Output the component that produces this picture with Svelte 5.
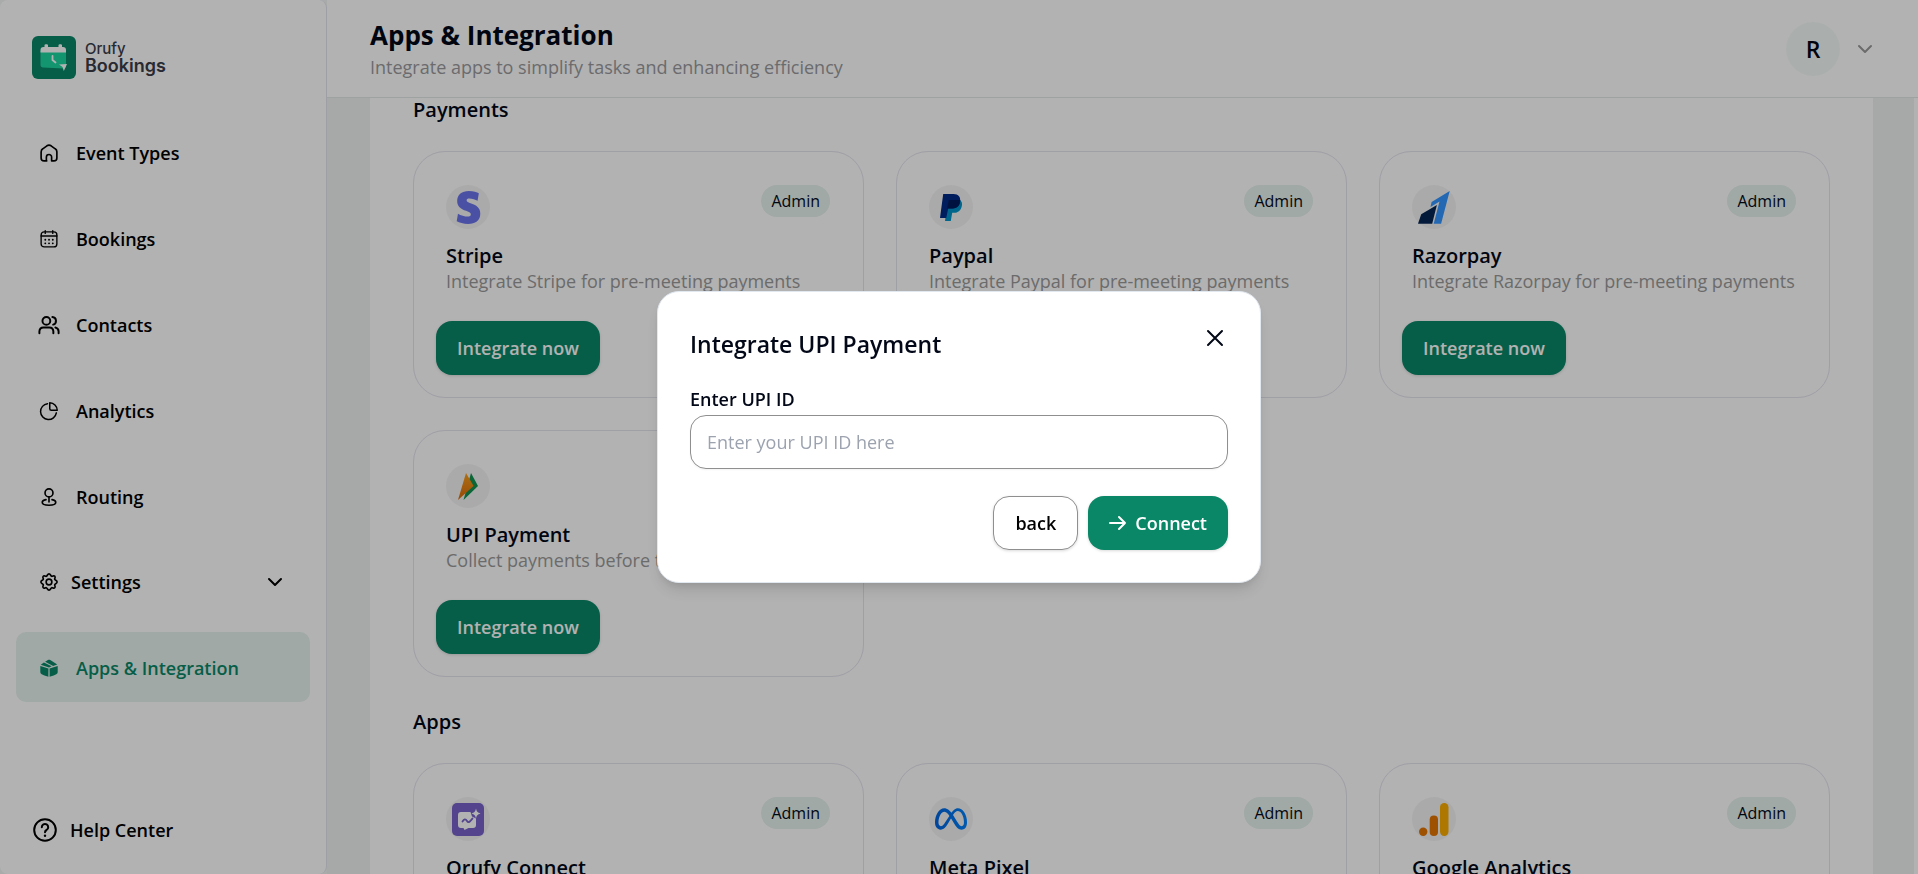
<script>
  const navItems = [
    { label: 'Event Types', icon: 'home' },
    { label: 'Bookings', icon: 'calendar' },
    { label: 'Contacts', icon: 'users' },
    { label: 'Analytics', icon: 'pie' },
    { label: 'Routing', icon: 'routing' },
    { label: 'Settings', icon: 'gear', expandable: true },
    { label: 'Apps & Integration', icon: 'box', active: true }
  ];

  const sections = [
    {
      title: 'Payments',
      cards: [
        { name: 'Stripe', logo: 'stripe', text: 'Integrate Stripe for pre-meeting payments', admin: true },
        { name: 'Paypal', logo: 'paypal', text: 'Integrate Paypal for pre-meeting payments', admin: true },
        { name: 'Razorpay', logo: 'razorpay', text: 'Integrate Razorpay for pre-meeting payments', admin: true },
        { name: 'UPI Payment', logo: 'upi', text: 'Collect payments before the meeting', admin: true }
      ]
    },
    {
      title: 'Apps',
      cards: [
        { name: 'Orufy Connect', logo: 'connect', text: 'Integrate Orufy Connect', admin: true },
        { name: 'Meta Pixel', logo: 'meta', text: 'Integrate Meta Pixel', admin: true },
        { name: 'Google Analytics', logo: 'analytics', text: 'Integrate Google Analytics', admin: true }
      ]
    }
  ];

  let open = $state(true);
  let upiId = $state('');
</script>

{#snippet navIcon(name)}
  <svg class="nav-icon" viewBox="0 0 24 24" fill="none" stroke="currentColor" stroke-width="2.2" stroke-linecap="round" stroke-linejoin="round" aria-hidden="true">
    {#if name === 'home'}
      <path d="M9 22.500H5.500A4 4 0 0 1 1.500 18.500V10.500A5 5 0 0 1 3.700 6.400L9.200 2.400A5 5 0 0 1 14.800 2.400L20.300 6.400A5 5 0 0 1 22.500 10.500V18.500A4 4 0 0 1 18.500 22.500H15.500V17.500A3.500 3.500 0 0 0 8.500 17.500V22.500" />
    {:else if name === 'calendar'}
      <rect x="1.500" y="2.500" width="21" height="20" rx="4" stroke-width="1.800" />
      <path d="M1.500 8H22.500M7 .8V4.500M17 .8V4.500" stroke-width="1.800" />
      <path d="M7 13h.1M12 13h.1M17 13h.1M7 17.800h.1M12 17.800h.1M17 17.800h.1" stroke-width="2.400" />
    {:else if name === 'users'}
      <circle cx="8.500" cy="6.500" r="5.200" stroke-width="2.600" />
      <path d="M-.8 23V20.500A5.500 5.500 0 0 1 4.500 15.300H12.500A5.500 5.500 0 0 1 17.800 20.500V23M16.500 1.300A5.200 5.200 0 0 1 17.500 11.500M20.500 15.300A5.500 5.500 0 0 1 24.800 20.500V23" stroke-width="2.600" />
    {:else if name === 'pie'}
      <path d="M10 2.200A10.600 10.600 0 1 0 21.800 14.500" stroke-width="2" />
      <path d="M13 1A10.300 10.300 0 0 1 23 11H15A2 2 0 0 1 13 9Z" stroke-width="2" />
    {:else if name === 'routing'}
      <circle cx="12" cy="6.500" r="5.300" stroke-width="2.200" />
      <path d="M12 12V18.500M8 15.500C5 16 3 17.200 3 19 3 21.300 7 23 12 23S21 21.300 21 19C21 17.200 19 16 16 15.500" stroke-width="2.200" />
    {:else if name === 'gear'}
      <circle cx="12" cy="12" r="3.800" />
      <path d="M12 1.200C14.200 1.200 14.200 4 15.600 4.400 17 4.800 18.200 2.900 19.700 4.300 21.200 5.800 19.200 7 19.600 8.400 20 9.800 22.800 9.800 22.800 12S20 14.200 19.600 15.600C19.200 17 21.200 18.200 19.700 19.700 18.200 21.200 17 19.200 15.600 19.600 14.200 20 14.200 22.800 12 22.800S9.800 20 8.400 19.600C7 19.200 5.800 21.200 4.300 19.700 2.800 18.200 4.800 17 4.400 15.600 4 14.200 1.200 14.200 1.200 12S4 9.800 4.400 8.400C4.800 7 2.800 5.800 4.300 4.300 5.800 2.800 7 4.800 8.400 4.400 9.800 4 9.800 1.200 12 1.200Z" />
    {:else if name === 'box'}
      <g fill="currentColor" stroke="none">
        <path d="M.4 9.200 11.200 12.800V23.600C9 23.200 4.500 21.800 2.300 20.400 1 19.500.4 18.500.4 17Z" />
        <path d="M23.600 9.200 12.800 12.800V23.600C15 23.200 19.500 21.800 21.700 20.400 23 19.500 23.600 18.500 23.600 17Z" />
        <path d="M1 7.500 5.200 4.700 15.500 9.800 12 11.200Z" />
        <path d="M6.800 3.600 10.500 1.400C11.600.8 12.600.8 13.700 1.400L23 7.400 17.500 9.200Z" />
      </g>
    {/if}
  </svg>
{/snippet}

{#snippet chevron()}
  <svg class="chevron" viewBox="0 0 16 10" fill="none" stroke="currentColor" stroke-width="2" stroke-linecap="round" stroke-linejoin="round" aria-hidden="true">
    <path d="M2 2 8 8 14 2" />
  </svg>
{/snippet}

{#snippet appLogo(name)}
  {#if name === 'stripe'}
    <svg width="33" height="33" viewBox="0 0 24 24" fill="#6b75eb" aria-hidden="true">
      <path d="M13.976 9.150c-2.172-.806-3.356-1.426-3.356-2.409 0-.831.683-1.305 1.901-1.305 2.227 0 4.515.858 6.090 1.631l.890-5.494C18.252.975 15.697 0 12.165 0 9.667 0 7.589.654 6.104 1.872 4.560 3.147 3.757 4.992 3.757 7.218c0 4.039 2.467 5.760 6.476 7.219 2.585.920 3.445 1.574 3.445 2.583 0 .980-.840 1.545-2.354 1.545-1.875 0-4.965-.921-6.990-2.109l-.900 5.555C5.175 22.990 8.385 24 11.714 24c2.641 0 4.843-.624 6.328-1.813 1.664-1.305 2.525-3.236 2.525-5.732 0-4.128-2.524-5.851-6.594-7.305h.003z" />
    </svg>
  {:else if name === 'paypal'}
    <svg width="22" height="27" viewBox="0 0 22 27" aria-hidden="true">
      <path d="M8 6H20C22 7.500 22.400 9.800 21.700 12.500 20.700 16.500 18 18.800 14 18.800H12.200L10.800 27H5Z" fill="#0093c7" />
      <path d="M3.200 0H13.500C18.500 0 21 3 20 8 19.200 12.200 16.400 14.500 12 14.500H8.200L6.200 24H0Z" fill="#002a86" />
      <path d="M8.800 6H20.200C20.200 11.500 17.400 14.500 12 14.500H7Z" fill="#001c5c" />
    </svg>
  {:else if name === 'razorpay'}
    <svg width="32" height="33" viewBox="0 0 32 33" aria-hidden="true">
      <path d="M31.700 0 23.100 32.800H15.700L21.500 10.600 12.500 16 13.600 11Z" fill="#3395ff" />
      <path d="M3.200 23.300 18.900 14 14.200 32.800H0Z" fill="#072654" />
    </svg>
  {:else if name === 'upi'}
    <svg width="20" height="27" viewBox="0 0 20 27" aria-hidden="true">
      <defs>
        <linearGradient id="upi-orange" x1="0" y1="0" x2="0" y2="1">
          <stop offset="0" stop-color="#f9a01b" />
          <stop offset="1" stop-color="#d9690a" />
        </linearGradient>
      </defs>
      <path d="M13 0 20 13 5.500 27Z" fill="#0f9150" />
      <path d="M8 0 15.600 13 0 27Z" fill="url(#upi-orange)" />
    </svg>
  {:else if name === 'connect'}
    <svg width="32" height="33" viewBox="0 0 32 33" aria-hidden="true">
      <rect width="32" height="33" rx="5" fill="#7862ca" />
      <path d="M9 9H18.500L20 13.500 24 15.500V22C24 24 23 25 21 25H16.500L12.500 27 11.500 25H9C7 25 6 24 6 22V12C6 10 7 9 9 9Z" fill="#fff" />
      <path d="M24 5.500C24.700 8.500 25.500 9.500 28.500 10.500 25.500 11.500 24.700 12.500 24 15.500 23.300 12.500 22.500 11.500 19.500 10.500 22.500 9.500 23.300 8.500 24 5.500Z" fill="#fff" />
      <path d="M10.500 18.500C12 16 13.500 15.500 15 18S18 18.500 20.500 15.500" fill="none" stroke="#7862ca" stroke-width="1.800" stroke-linecap="round" />
    </svg>
  {:else if name === 'meta'}
    <svg width="32" height="32" viewBox="0 0 24 24" aria-hidden="true">
      <defs>
        <linearGradient id="meta-blue" x1="0" y1="0" x2="1" y2="0">
          <stop offset="0" stop-color="#0064e0" />
          <stop offset="1" stop-color="#0082fb" />
        </linearGradient>
      </defs>
      <path fill="url(#meta-blue)" d="M6.915 4.030c-1.968 0-3.683 1.280-4.871 3.113C.704 9.208 0 11.883 0 14.449c0 .706.070 1.369.210 1.973a6.624 6.624 0 0 0 .265.860 5.297 5.297 0 0 0 .371.761c.696 1.159 1.818 1.927 3.593 1.927 1.497 0 2.633-.671 3.965-2.444.760-1.012 1.144-1.626 2.663-4.320l.756-1.339.186-.325c.061.100.121.196.183.300l2.152 3.595c.724 1.210 1.665 2.556 2.470 3.314 1.046.987 1.992 1.220 3.060 1.220 1.075 0 1.876-.355 2.455-.843a3.743 3.743 0 0 0 .810-.973c.542-.939.861-2.127.861-3.745 0-2.720-.681-5.357-2.084-7.450-1.282-1.912-2.957-2.930-4.716-2.930-1.047 0-2.088.467-3.053 1.308-.652.570-1.257 1.290-1.820 2.050-.690-.875-1.335-1.547-1.958-2.056-1.182-.966-2.315-1.303-3.454-1.303zm10.160 2.053c1.147 0 2.188.758 2.992 1.999 1.132 1.748 1.647 4.195 1.647 6.400 0 1.548-.368 2.900-1.839 2.900-.580 0-1.027-.230-1.664-1.004-.496-.601-1.343-1.878-2.832-4.358l-.617-1.028a44.908 44.908 0 0 0-1.255-1.980c.070-.109.141-.224.211-.327 1.120-1.667 2.118-2.602 3.358-2.602zm-10.201.553c1.265 0 2.058.791 2.675 1.446.307.327.737.871 1.234 1.579l-1.020 1.566c-.757 1.163-1.882 3.017-2.837 4.338-1.191 1.649-1.810 1.817-2.486 1.817-.524 0-1.038-.237-1.383-.794-.263-.426-.464-1.130-.464-2.046 0-2.221.630-4.535 1.660-6.088.454-.687.964-1.226 1.533-1.533a2.264 2.264 0 0 1 1.088-.285z" />
    </svg>
  {:else if name === 'analytics'}
    <svg width="30" height="33" viewBox="0 0 30 33" aria-hidden="true">
      <rect x="21" y="0" width="8.500" height="33" rx="4.200" fill="#f9ab00" />
      <rect x="10.700" y="12.500" width="8.300" height="20.500" rx="4.100" fill="#e37400" />
      <circle cx="4.200" cy="28.800" r="4.200" fill="#e37400" />
    </svg>
  {/if}
{/snippet}

<div class="app">
  <aside class="sidebar">
    <a class="brand" href="#home">
      <svg width="44" height="43" viewBox="0 0 44 43" aria-hidden="true">
        <rect width="44" height="43" rx="6" fill="#0a8767" />
        <path d="M8.500 15H34V30C34 31.500 33 32.500 31.500 32.500L11 31.500C9.500 31.400 8.500 30.500 8.500 29Z" fill="#1cd6a1" />
        <path d="M11.500 11H12.500V9C12.500 8 16 8 16 9V11H26.500V9C26.500 8 30 8 30 9V11H31C33 11 34 12 34 14V16.500H8.500V14C8.500 12 9.500 11 11.500 11Z" fill="#fff" />
        <path d="M20.500 20V24L23.500 26.500" fill="none" stroke="#fff" stroke-width="1.800" stroke-linecap="round" />
        <path d="M27 28.500 35 28 31.800 35 30.500 31Z" fill="#fff" />
      </svg>
      <span class="brand-text"><span class="brand-top">Orufy</span><span class="brand-bottom">Bookings</span></span>
    </a>
    <nav>
      {#each navItems as item}
        <a class="nav-row" class:active={item.active} class:expandable={item.expandable} href="#{item.icon}">
          {@render navIcon(item.icon)}
          <span>{item.label}</span>
          {#if item.expandable}{@render chevron()}{/if}
        </a>
      {/each}
    </nav>
    <a class="help" href="#help">
      <svg width="24" height="24" viewBox="0 0 24 24" fill="none" stroke="currentColor" stroke-width="2" stroke-linecap="round" aria-hidden="true">
        <circle cx="12" cy="12" r="10.800" />
        <path d="M8.800 9.200A3.200 3.200 0 1 1 13.600 12C12.500 12.600 12 13 12 14.200" />
        <path d="M12 17.600V17.700" stroke-width="2.400" />
      </svg>
      <span>Help Center</span>
    </a>
  </aside>

  <div class="content">
    <header>
      <div class="heading">
        <h1>Apps &amp; Integration</h1>
        <p>Integrate apps to simplify tasks and enhancing efficiency</p>
      </div>
      <button class="account" aria-label="Account menu">
        <span class="avatar">R</span>
        {@render chevron()}
      </button>
    </header>
    <main>
      <div class="panel">
        {#each sections as section}
          <section>
            <h2>{section.title}</h2>
            <div class="cards">
              {#each section.cards as card}
                <article class="card">
                  <div class="card-top">
                    <span class="logo">{@render appLogo(card.logo)}</span>
                    {#if card.admin}<span class="badge">Admin</span>{/if}
                  </div>
                  <h3>{card.name}</h3>
                  <p>{card.text}</p>
                  <button class="btn primary integrate" onclick={() => (open = true)}>Integrate now</button>
                </article>
              {/each}
            </div>
          </section>
        {/each}
      </div>
    </main>
  </div>
</div>

{#if open}
  <div class="overlay">
    <div class="modal" role="dialog" aria-modal="true" aria-labelledby="modal-title">
      <div class="modal-head">
        <h2 id="modal-title">Integrate UPI Payment</h2>
        <button class="close" aria-label="Close" onclick={() => (open = false)}>
          <svg width="18" height="18" viewBox="0 0 18 18" fill="none" stroke="currentColor" stroke-width="2" stroke-linecap="round" aria-hidden="true">
            <path d="M2 2 16 16M16 2 2 16" />
          </svg>
        </button>
      </div>
      <label for="upi-id">Enter UPI ID</label>
      <input id="upi-id" type="text" placeholder="Enter your UPI ID here" bind:value={upiId} />
      <div class="actions">
        <button class="btn outline" onclick={() => (open = false)}>back</button>
        <button class="btn primary">
          <svg width="18" height="16" viewBox="0 0 18 16" fill="none" stroke="currentColor" stroke-width="2" stroke-linecap="round" stroke-linejoin="round" aria-hidden="true">
            <path d="M1 8H16M10 2 16 8 10 14" />
          </svg>
          Connect
        </button>
      </div>
    </div>
  </div>
{/if}

<style>
  :global(body) {
    font-family: 'Segoe UI', 'Open Sans', 'Noto Sans', sans-serif;
    color: #020817;
    background: #fff;
  }
  * {
    box-sizing: border-box;
  }
  h1, h2, h3, p {
    margin: 0;
  }
  a {
    color: inherit;
    text-decoration: none;
  }
  button, input {
    font-family: inherit;
  }
  .app {
    display: flex;
    height: 100vh;
    overflow: hidden;
    background: #f2f5f4;
  }
  .sidebar {
    display: flex;
    flex-direction: column;
    flex: none;
    width: 327px;
    padding: 36px 16px 32px;
    background: #fff;
    border-right: 1px solid #e2e4ee;
    border-radius: 8px;
    color: #000;
  }
  .brand {
    display: flex;
    gap: 9px;
    padding-left: 16px;
  }
  .brand-text {
    display: flex;
    flex-direction: column;
    padding-top: 4px;
    font-family: Inter, sans-serif;
    color: #3b3c48;
  }
  .brand-top {
    font-size: 15px;
    line-height: 17px;
    font-weight: 500;
  }
  .brand-bottom {
    font-size: 18px;
    line-height: 18px;
    font-weight: 600;
  }
  nav {
    display: flex;
    flex-direction: column;
    gap: 16px;
    margin-top: 37px;
  }
  .nav-row {
    display: flex;
    align-items: center;
    gap: 18px;
    height: 70px;
    padding: 4px 27px 0 24px;
    border-radius: 10px;
    font-size: 18px;
    font-weight: 600;
  }
  .nav-row.active {
    padding-top: 2px;
    background: #e5f2ee;
    color: #0a8767;
  }
  .nav-row.expandable {
    gap: 13px;
    padding-top: 2px;
  }
  .nav-row .chevron {
    margin-left: auto;
  }
  .nav-icon {
    width: 18px;
    height: 18px;
    overflow: visible;
  }
  .chevron {
    width: 16px;
    height: 10px;
  }
  .help {
    display: flex;
    align-items: center;
    gap: 13px;
    margin-top: auto;
    padding-left: 17px;
    font-size: 18px;
    line-height: 24px;
    font-weight: 600;
  }
  .content {
    display: flex;
    flex-direction: column;
    flex: 1;
    min-width: 0;
    background: #fff;
  }
  header {
    display: flex;
    justify-content: space-between;
    align-items: center;
    flex: none;
    height: 98px;
    padding: 0 45px 0 43px;
    border-bottom: 1px solid #e2e8e6;
  }
  h1 {
    font-size: 26px;
    line-height: 36px;
    font-weight: 700;
  }
  .heading p {
    font-size: 18px;
    line-height: 28px;
    color: #9a9a9e;
  }
  .account {
    display: flex;
    align-items: center;
    gap: 17px;
    padding: 0;
    border: 0;
    background: none;
    color: #9a9a9a;
  }
  .avatar {
    width: 54px;
    height: 54px;
    border-radius: 50%;
    background: #f4fbf9;
    color: #020817;
    font-size: 23px;
    line-height: 54px;
    font-weight: 600;
  }
  main {
    flex: 1;
    min-height: 0;
    margin-right: 4px;
    padding: 0 41px 0 43px;
    overflow: hidden;
    background: #eff3f1;
  }
  .panel {
    display: flex;
    flex-direction: column;
    gap: 33px;
    padding: 0 43px 43px;
    background: #fff;
  }
  h2 {
    font-size: 20px;
    line-height: 24px;
    font-weight: 600;
  }
  section h2 {
    margin-bottom: 29px;
  }
  .cards {
    display: grid;
    grid-template-columns: repeat(3, 1fr);
    gap: 32px;
  }
  .card {
    display: flex;
    flex-direction: column;
    height: 247px;
    padding: 33px 33px 22px 32px;
    border: 1px solid #e4e4ee;
    border-radius: 32px;
  }
  .card-top {
    display: flex;
    justify-content: space-between;
    align-items: flex-start;
  }
  .logo {
    display: flex;
    align-items: center;
    justify-content: center;
    width: 44px;
    height: 44px;
    border-radius: 50%;
    background: #f4f4f4;
  }
  .badge {
    padding: 0 10px;
    border-radius: 16px;
    background: #e5f2ee;
    font-size: 16px;
    line-height: 32px;
  }
  h3 {
    margin-top: 14px;
    font-size: 20px;
    line-height: 26px;
    font-weight: 600;
  }
  .card p {
    font-size: 18px;
    line-height: 24px;
    color: #9a9a9a;
    white-space: nowrap;
  }
  .btn {
    display: inline-flex;
    align-items: center;
    gap: 8px;
    height: 54px;
    padding: 0 21px;
    border: 0;
    border-radius: 16px;
    font-size: 18px;
    font-weight: 600;
    box-shadow: 0 1px 3px rgba(0, 0, 0, 0.15);
  }
  .primary {
    background: #0a8767;
    color: #fff;
  }
  .outline {
    border: 1px solid #8f8f8f;
    background: #fff;
    color: #000;
  }
  .integrate {
    align-self: flex-start;
    margin: auto 0 0 -10px;
  }
  .overlay {
    position: fixed;
    inset: 0;
    display: flex;
    align-items: center;
    justify-content: center;
    background: rgba(0, 0, 0, 0.3);
  }
  .modal {
    display: flex;
    flex-direction: column;
    width: 604px;
    max-width: 90%;
    padding: 32px;
    background: #fff;
    border: 1px solid #e2e8f0;
    border-radius: 22px;
    box-shadow: 0 10px 16px -3px rgba(0, 0, 0, 0.12), 0 4px 8px -4px rgba(0, 0, 0, 0.12);
  }
  .modal-head {
    display: flex;
    justify-content: space-between;
    align-items: flex-start;
    height: 62px;
  }
  .modal h2 {
    font-size: 23px;
    line-height: 40px;
  }
  .close {
    display: flex;
    margin: 5px 4px 0 0;
    padding: 0;
    border: 0;
    background: none;
    color: #020817;
  }
  label {
    font-size: 18px;
    line-height: 26px;
    font-weight: 600;
    margin-bottom: 3px;
  }
  input {
    height: 54px;
    padding: 0 16px;
    border: 1px solid #8f8f8f;
    border-radius: 16px;
    font-size: 18px;
    box-shadow: 0 1px 2px rgba(0, 0, 0, 0.05);
  }
  input::placeholder {
    color: #9ca3af;
    opacity: 1;
  }
  .actions {
    display: flex;
    justify-content: flex-end;
    gap: 10px;
    margin-top: 27px;
  }
</style>
